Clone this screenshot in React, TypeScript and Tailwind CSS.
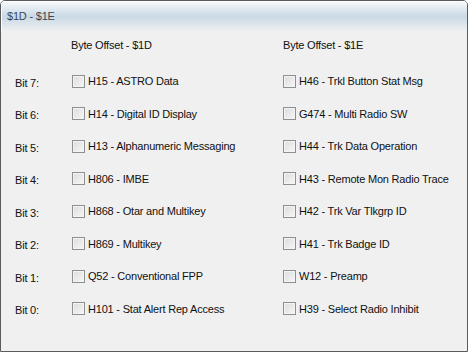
const leftBits = [
  "H15 - ASTRO Data",
  "H14 - Digital ID Display",
  "H13 - Alphanumeric Messaging",
  "H806 - IMBE",
  "H868 - Otar and Multikey",
  "H869 - Multikey",
  "Q52 - Conventional FPP",
  "H101 - Stat Alert Rep Access",
];

const rightBits = [
  "H46 - Trkl Button Stat Msg",
  "G474 - Multi Radio SW",
  "H44 - Trk Data Operation",
  "H43 - Remote Mon Radio Trace",
  "H42 - Trk Var Tlkgrp ID",
  "H41 - Trk Badge ID",
  "W12 - Preamp",
  "H39 - Select Radio Inhibit",
];

function CheckItem({ label }: { label: string }) {
  return (
    <label className="flex items-center gap-[3px]">
      <span className="w-[13px] h-[13px] border border-[#8e8f8f] bg-gradient-to-br from-[#dcdcdc] to-[#f7f7f7] shadow-[inset_0_0_0_1px_#f4f4f4]" />
      <span>{label}</span>
    </label>
  );
}

export default function App() {
  return (
    <div className="w-[470px] h-[353px] bg-white">
      <div
        className="w-[468px] h-[352px] border border-[#5b5b5b] rounded-t-[5px] bg-[#f0f0f0] overflow-hidden text-[11px] text-[#111] tracking-[-0.2px]"
        style={{ fontFamily: '"Liberation Sans", Arial, sans-serif' }}
      >
        {/* Title bar */}
        <div className="h-[30px] border-t border-l border-white bg-gradient-to-b from-[#f7f9fb] via-[#c9d9e5] to-[#eef0f1] pl-[5px] pt-[6px] text-[#3c4650]">
          $1D - $1E
        </div>

        {/* Column headers */}
        <div className="flex pt-[6px] h-[34px]">
          <div className="w-[70px]" />
          <div className="w-[212px]">Byte Offset - $1D</div>
          <div>Byte Offset - $1E</div>
        </div>

        {/* Bit rows */}
        <div className="flex flex-col">
          {leftBits.map((left, i) => (
            <div key={i} className="flex items-center h-[32.5px]">
              <div className="w-[71px] pl-[14px] pt-[3px]">Bit {7 - i}:</div>
              <div className="w-[211px]">
                <CheckItem label={left} />
              </div>
              <div>
                <CheckItem label={rightBits[i]} />
              </div>
            </div>
          ))}
        </div>
      </div>
    </div>
  );
}
